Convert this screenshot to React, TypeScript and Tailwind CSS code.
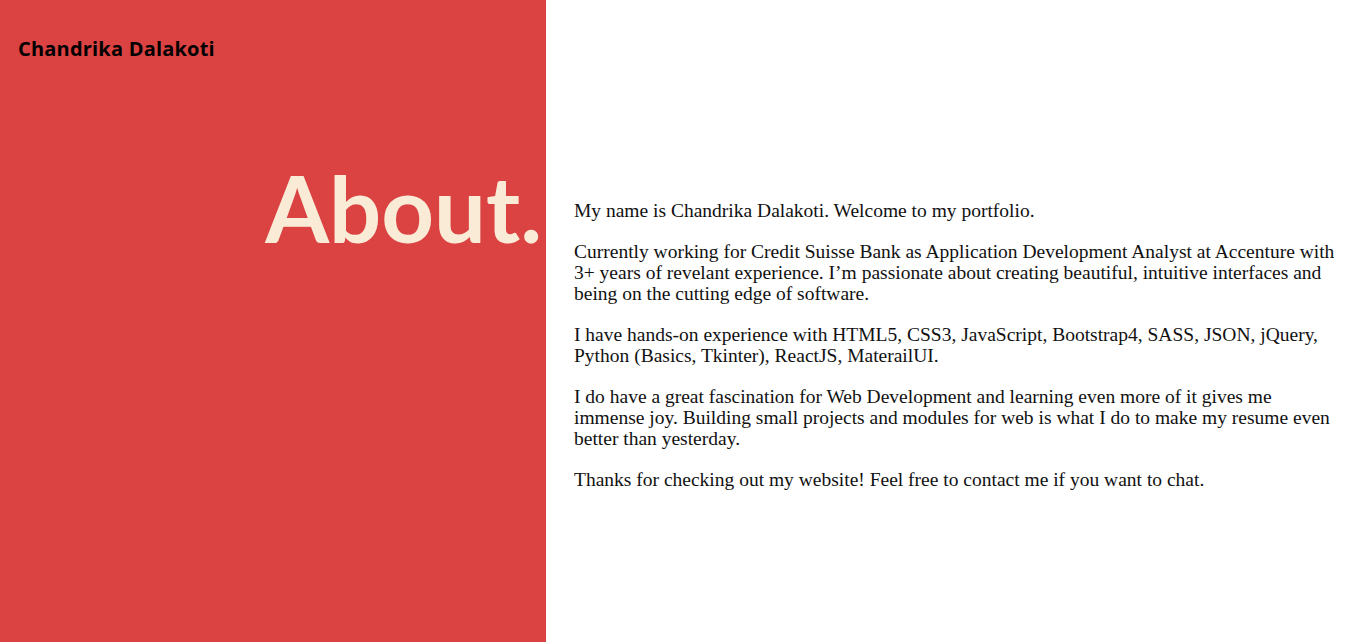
import React from "react";

export default function App() {
  const paras = [
    "My name is Chandrika Dalakoti. Welcome to my portfolio.",
    "Currently working for Credit Suisse Bank as Application Development Analyst at Accenture with 3+ years of revelant experience. I\u2019m passionate about creating beautiful, intuitive interfaces and being on the cutting edge of software.",
    "I have hands-on experience with HTML5, CSS3, JavaScript, Bootstrap4, SASS, JSON, jQuery, Python (Basics, Tkinter), ReactJS, MaterailUI.",
    "I do have a great fascination for Web Development and learning even more of it gives me immense joy. Building small projects and modules for web is what I do to make my resume even better than yesterday.",
    "Thanks for checking out my website! Feel free to contact me if you want to chat.",
  ];
  return (
    <div className="flex w-[1365px] h-[642px] overflow-hidden bg-white">
      <div className="w-[546px] h-full bg-[#db4242] flex flex-col shrink-0">
        <div className="pl-[18px] pt-[37px] text-[20px] leading-[24px] font-bold tracking-[0.2px] text-black [font-family:'Open_Sans',sans-serif]">
          Chandrika Dalakoti
        </div>
        <div className="mt-[92px] pr-[4px] text-right text-[92px] leading-[110px] font-bold text-[#faebd7] [font-family:Lato,'Open_Sans',sans-serif]">
          About.
        </div>
      </div>
      <div className="flex-1 pl-[28px] pr-[20px] pt-[200px] text-[19.5px] leading-[21px] text-[#111] [font-family:'Liberation_Serif',serif]">
        {paras.map((p, i) => (
          <p key={i} className="mb-[20px]">
            {p}
          </p>
        ))}
      </div>
    </div>
  );
}
